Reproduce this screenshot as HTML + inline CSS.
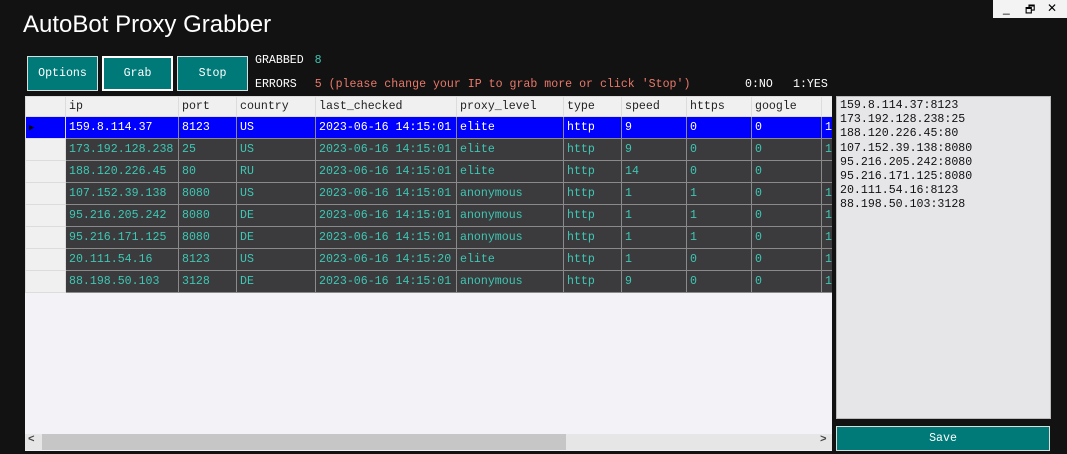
<!DOCTYPE html>
<html><head><meta charset="utf-8"><style>
*{margin:0;padding:0;box-sizing:border-box}
body{width:1067px;height:454px;background:#121212;position:relative;overflow:hidden;font-family:"Liberation Mono",monospace;font-size:11.6px}
.abs{position:absolute}
.title{left:23px;top:11px;color:#fff;font-family:"Liberation Sans",sans-serif;font-size:24px}
.btn{background:#007a78;color:#fff;border:1px solid #ddd;display:flex;align-items:center;justify-content:center;font-size:11.6px}
.lbl{color:#fff;font-size:11.6px}
table{border-collapse:collapse;table-layout:fixed}
td,th{border:1px solid #8a8a8a;height:22px;padding:0 3px;white-space:nowrap;overflow:hidden;text-align:left;font-weight:normal}
th{background:#f0f0f0;color:#222;height:20px;border-color:#dcdcdc}
td{background:#3b3b3d;color:#3ec7b4}
tr.sel td{background:#0000ff;color:#fff}
td.rh{background:#f0f0f0;border-color:#dcdcdc}
</style></head><body>
<div class="abs title">AutoBot Proxy Grabber</div>
<div class="abs" style="left:993px;top:0;width:74px;height:18px;background:#f3f3f3;font-family:'Liberation Sans',sans-serif;font-size:12px;color:#000">
<span class="abs" style="left:10px;top:1px">_</span><span class="abs" style="left:32px;top:1px;font-size:11px">🗗</span><span class="abs" style="left:54px;top:1px">✕</span></div>
<div class="abs btn" style="left:27px;top:56px;width:71px;height:35px">Options</div>
<div class="abs btn" style="left:102px;top:56px;width:71px;height:35px;border:2px solid #fff">Grab</div>
<div class="abs btn" style="left:177px;top:56px;width:71px;height:35px">Stop</div>
<div class="abs lbl" style="left:255px;top:54px">GRABBED <span style="color:#3ec7b4;margin-left:4px">8</span></div>
<div class="abs lbl" style="left:255px;top:78px">ERRORS <span style="color:#e9786a;margin-left:11px">5 (please change your IP to grab more or click 'Stop')</span></div>
<div class="abs lbl" style="left:745px;top:78px">0:NO</div>
<div class="abs lbl" style="left:793px;top:78px">1:YES</div>
<div class="abs" style="left:25px;top:96px;width:807px;height:355px;background:#f3f2f6;overflow:hidden">
<table style="width:820px">
<colgroup><col style="width:40px"><col style="width:113px"><col style="width:58px"><col style="width:79px"><col style="width:141px"><col style="width:107px"><col style="width:58px"><col style="width:65px"><col style="width:65px"><col style="width:70px"><col style="width:24px"></colgroup>
<tr><th></th><th>ip</th><th>port</th><th>country</th><th>last_checked</th><th>proxy_level</th><th>type</th><th>speed</th><th>https</th><th>google</th><th></th></tr>
<tr class="sel"><td class="rh" style="color:#000;font-size:9px">▶</td><td>159.8.114.37</td><td>8123</td><td>US</td><td>2023-06-16 14:15:01</td><td>elite</td><td>http</td><td>9</td><td>0</td><td>0</td><td>1</td></tr>
<tr><td class="rh"></td><td>173.192.128.238</td><td>25</td><td>US</td><td>2023-06-16 14:15:01</td><td>elite</td><td>http</td><td>9</td><td>0</td><td>0</td><td>1</td></tr>
<tr><td class="rh"></td><td>188.120.226.45</td><td>80</td><td>RU</td><td>2023-06-16 14:15:01</td><td>elite</td><td>http</td><td>14</td><td>0</td><td>0</td><td></td></tr>
<tr><td class="rh"></td><td>107.152.39.138</td><td>8080</td><td>US</td><td>2023-06-16 14:15:01</td><td>anonymous</td><td>http</td><td>1</td><td>1</td><td>0</td><td>1</td></tr>
<tr><td class="rh"></td><td>95.216.205.242</td><td>8080</td><td>DE</td><td>2023-06-16 14:15:01</td><td>anonymous</td><td>http</td><td>1</td><td>1</td><td>0</td><td>1</td></tr>
<tr><td class="rh"></td><td>95.216.171.125</td><td>8080</td><td>DE</td><td>2023-06-16 14:15:01</td><td>anonymous</td><td>http</td><td>1</td><td>1</td><td>0</td><td>1</td></tr>
<tr><td class="rh"></td><td>20.111.54.16</td><td>8123</td><td>US</td><td>2023-06-16 14:15:20</td><td>elite</td><td>http</td><td>1</td><td>0</td><td>0</td><td>1</td></tr>
<tr><td class="rh"></td><td>88.198.50.103</td><td>3128</td><td>DE</td><td>2023-06-16 14:15:01</td><td>anonymous</td><td>http</td><td>9</td><td>0</td><td>0</td><td>1</td></tr>
</table>
<div class="abs" style="left:0;top:338px;width:807px;height:16px;background:#e6e6e6"></div>
<div class="abs" style="left:17px;top:338px;width:524px;height:16px;background:#c6c6c6"></div>
<div class="abs" style="left:3px;top:338px;color:#444;font-size:11px;font-weight:bold">&lt;</div>
<div class="abs" style="left:795px;top:338px;color:#444;font-size:11px;font-weight:bold">&gt;</div>
</div>
<div class="abs" style="left:836px;top:96px;width:215px;height:323px;background:#e6e5e8;border:1px solid #bbb;color:#111;padding:2px 3px;line-height:14.2px;font-size:11.6px">159.8.114.37:8123<br>173.192.128.238:25<br>188.120.226.45:80<br>107.152.39.138:8080<br>95.216.205.242:8080<br>95.216.171.125:8080<br>20.111.54.16:8123<br>88.198.50.103:3128</div>
<div class="abs btn" style="left:836px;top:426px;width:214px;height:25px">Save</div>
</body></html>
